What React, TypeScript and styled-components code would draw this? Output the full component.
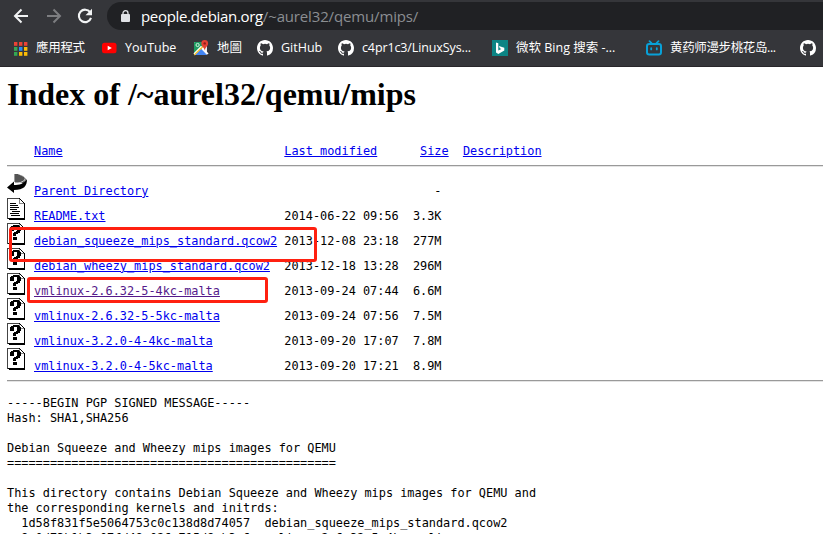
import React from "react";
import styled, { createGlobalStyle } from "styled-components";

const GlobalStyle = createGlobalStyle`
  * { box-sizing: border-box; }
  html, body { margin: 0; padding: 0; background: #fff; overflow: hidden; }
  svg { display: block; flex: none; }
`;

const Window = styled.div`
  position: relative;
  width: 823px;
  height: 534px;
  overflow: hidden;
  background: #fff;
  color: #000;
`;

const Chrome = styled.header`
  height: 67px;
  background: #35363a;
  border-bottom: 1px solid #28262a;
  font-family: "Open Sans", "Noto Sans", "Noto Sans CJK TC", sans-serif;
`;

const Toolbar = styled.div`
  display: flex;
  align-items: center;
  height: 32px;
  padding-left: 13px;
`;

const NavButton = styled.span<{ $gap: number }>`
  display: flex;
  margin-right: ${(p) => p.$gap}px;
`;

const AddressBar = styled.div`
  display: flex;
  align-items: center;
  flex: 1;
  height: 28px;
  padding-left: 14px;
  background: #202124;
  border-radius: 14px 0 0 14px;
`;

const Url = styled.div`
  margin-left: 11px;
  font-size: 15px;
  line-height: 24px;
  white-space: nowrap;
  color: #9aa0a6;
`;

const Host = styled.span`
  color: #fff;
  letter-spacing: -0.32px;
`;

const Path = styled.span`
  color: #8b8e92;
  letter-spacing: -0.15px;
`;

const BookmarkBar = styled.nav`
  display: flex;
  align-items: center;
  height: 32px;
  padding-left: 13px;
`;

const Bookmark = styled.div<{ $width: number }>`
  display: flex;
  align-items: center;
  flex: none;
  gap: 8px;
  width: ${(p) => p.$width}px;
`;

const BookmarkLabel = styled.span<{ $cn?: boolean; $track?: number }>`
  font-family: "Open Sans", ${(p) => (p.$cn ? '"Noto Sans CJK SC"' : '"Noto Sans CJK TC"')}, sans-serif;
  font-size: 12.5px;
  line-height: 18px;
  letter-spacing: ${(p) => p.$track ?? 0}px;
  white-space: nowrap;
  color: #fff;
`;

const Page = styled.main`
  padding: 8px 0 0 7px;
  font-family: "DejaVu Sans Mono", monospace;
  font-size: 11.88px;
  line-height: 15px;
`;

const Title = styled.h1`
  margin: 0 0 31px;
  font: bold 32px/38px "Liberation Serif", serif;
`;

const Rule = styled.hr`
  height: 2px;
  margin: 0;
  border: 0;
  border-top: 1px solid #999;
  border-bottom: 1px solid #e4e4e4;
`;

const Row = styled.div<{ $header?: boolean }>`
  display: grid;
  grid-template-columns: 27px 250.3px 128.6px 50px auto;
  grid-template-rows: 100%;
  align-items: end;
  height: ${(p) => (p.$header ? 21 : 25)}px;
  padding-bottom: ${(p) => (p.$header ? 6 : 0)}px;
`;

const IconCell = styled.span`
  align-self: start;
`;

const Listing = styled.div`
  padding: 7px 0 6px;

  ${IconCell} {
    margin-top: -1px;
  }
`;

const Link = styled.a<{ $visited?: boolean }>`
  justify-self: start;
  color: ${(p) => (p.$visited ? "#551a8b" : "#0000ee")};
  text-decoration: underline;
  text-decoration-thickness: 1px;
  text-underline-offset: 1px;
  white-space: nowrap;
`;

const Cell = styled.span`
  white-space: pre;
`;

const SizeHeader = styled.span`
  padding-left: 7.15px;
`;

const Message = styled.pre`
  margin: 14px 0 0;
  font: inherit;
`;

const Highlight = styled.div<{ $x: number; $y: number; $w: number; $h: number }>`
  position: absolute;
  left: ${(p) => p.$x}px;
  top: ${(p) => p.$y}px;
  width: ${(p) => p.$w}px;
  height: ${(p) => p.$h}px;
  border: 3px solid #ff2010;
  border-radius: 3px;
`;

const Arrow = ({ color, flip }: { color: string; flip?: boolean }) => (
  <svg width="16" height="16" viewBox="0 0 16 16" fill="none" stroke={color} strokeWidth="2">
    <path d={flip ? "M1 8H13.5M7.5 1.5 14 8 7.5 14.5" : "M15 8H2.5M8.5 1.5 2 8 8.5 14.5"} />
  </svg>
);

const Reload = () => (
  <svg width="16" height="16" viewBox="0 0 16 16">
    <path d="M13.1 4.2A6.2 6.2 0 1 0 14 9.8" fill="none" stroke="#f1f3f4" strokeWidth="2.1" />
    <path d="M15 .7v6.6H8.5z" fill="#f1f3f4" />
  </svg>
);

const Lock = () => (
  <svg width="9" height="12" viewBox="0 0 9 12">
    <path d="M2 5V3.2a2.5 2.5 0 0 1 5 0V5" fill="none" stroke="#dfe1e5" strokeWidth="1.3" />
    <rect x="0" y="4" width="9" height="8" rx="1" fill="#dfe1e5" />
  </svg>
);

const appColors = ["#ea4335", "#ea4335", "#ea4335", "#34a853", "#2b8cf0", "#fbbc05", "#34a853", "#fbbc05", "#fbbc05"];
const Apps = () => (
  <svg width="15" height="15" viewBox="0 0 15 15">
    {appColors.map((c, i) => (
      <rect key={i} x={1 + (i % 3) * 5} y={1 + Math.floor(i / 3) * 5} width="3.4" height="3.8" fill={c} />
    ))}
  </svg>
);

const YouTube = () => (
  <svg width="16" height="16" viewBox="0 0 16 16">
    <rect x="1" y="2.7" width="14.5" height="10.6" rx="2.5" fill="#f00" />
    <path d="m6.7 5.7 4.2 2.3-4.2 2.3z" fill="#fff" />
  </svg>
);

const Maps = () => (
  <svg width="16" height="16" viewBox="0 0 16 16">
    <rect x="1" y="2" width="13" height="13" rx="1" fill="#e8eaed" />
    <path d="M2 2h8v6l-9 7V3a1 1 0 0 1 1-1" fill="#1e9b61" />
    <path d="M2 15 8 8.7l6 6.3z" fill="#4285f4" />
    <path d="m1 14 7-7 7 7" fill="none" stroke="#fff" strokeWidth="1.6" />
    <path d="M1.3 15 10 6.5" stroke="#fbc02d" strokeWidth="1.2" />
    <circle cx="4.6" cy="5" r="1.6" fill="none" stroke="#d5f0df" strokeWidth="1" />
    <path d="M11.7 0a3.4 3.4 0 0 1 3.4 3.4c0 2.6-2.8 3.5-3.4 7-.6-3.5-3.4-4.4-3.4-7A3.4 3.4 0 0 1 11.7 0" fill="#e34133" />
    <circle cx="11.7" cy="3.4" r="1.2" fill="#8b1d18" />
  </svg>
);

const GitHub = () => (
  <svg width="16" height="16" viewBox="0 0 16 16">
    <path
      fill="#fff"
      fillRule="evenodd"
      d="M8 0C3.58 0 0 3.58 0 8c0 3.54 2.29 6.53 5.47 7.59.4.07.55-.17.55-.38 0-.19-.01-.82-.01-1.49-2.01.37-2.53-.49-2.69-.94-.09-.23-.48-.94-.82-1.13-.28-.15-.68-.52-.01-.53.63-.01 1.08.58 1.23.82.72 1.21 1.87.87 2.33.66.07-.52.28-.87.51-1.07-1.78-.2-3.64-.89-3.64-3.95 0-.87.31-1.59.82-2.15-.08-.2-.36-1.02.08-2.12 0 0 .67-.21 2.2.82a7.6 7.6 0 0 1 4 0c1.53-1.04 2.2-.82 2.2-.82.44 1.1.16 1.92.08 2.12.51.56.82 1.27.82 2.15 0 3.07-1.87 3.75-3.65 3.95.29.25.54.73.54 1.48 0 1.07-.01 1.93-.01 2.2 0 .21.15.46.55.38A8.01 8.01 0 0 0 16 8c0-4.42-3.58-8-8-8"
    />
  </svg>
);

const Bing = () => (
  <svg width="16" height="16" viewBox="0 0 16 16">
    <rect width="16" height="16" fill="#0c8484" />
    <path d="m4 2.5 2.3.8v7.3l3-1.7-1.5-.7-.9-2.3 5.4 1.9v2.6l-6 3.5L4 12.4z" fill="#fff" />
  </svg>
);

const Bilibili = () => (
  <svg width="16" height="16" viewBox="0 0 16 16" fill="none" stroke="#08a1d8" strokeLinecap="round">
    <rect x="1" y="4" width="14" height="10.5" rx="2.2" strokeWidth="2" />
    <path d="m3.5 1.2 2 2m7-2-2 2" strokeWidth="1.7" />
    <path d="M5.2 8.2v1.2m5.6-1.2v1.2" strokeWidth="1.8" />
  </svg>
);

const PageOutline = () => (
  <>
    <path d="M0 0h13v1h1v1h1v1h1v1h1v1h1v17H2v-1H0z" fill="#000" />
    <path d="M1 1h11v5h5v14H1z" fill="#fff" />
    <path d="M0 0h12v1H1v20H0z" fill="#444" />
    <path d="M13 2h1v1h1v1h1v1h-3z" fill="#fff" />
    <path d="M12 1h1v5h-1zM13 5h4v1h-4z" fill="#888" />
  </>
);

const BackIcon = () => (
  <svg width="20" height="22" viewBox="0 0 20 22">
    <path d="M8 1h3l5 2 3 3v4H8z" fill="#777" />
    <path d="M8 1v8M10 1v8M12 2v7M14 3v6M16 4v6" stroke="#333" strokeWidth="1" />
    <path d="M0 14.5 7 8.5v3.5c5 0 10-1 13-6 0 7-3 11-13 11v3z" fill="#000" />
    <path d="M8 10c4 .5 8-1 10-3.5" fill="none" stroke="#eee" strokeWidth=".8" />
  </svg>
);

const TextIcon = () => (
  <svg width="20" height="22" viewBox="0 0 20 22" shapeRendering="crispEdges">
    <PageOutline />
    <path d="M3 5.5h6M3 7.5h8M3 9.5h9M3 11.5h7M5 13.5h8M3 15.5h9M4 17.5h9" stroke="#000" />
  </svg>
);

const UnknownIcon = () => (
  <svg width="20" height="22" viewBox="0 0 20 22" shapeRendering="crispEdges">
    <PageOutline />
    <path d="M3 4h1V3h2V2h6v1h1v1h1v4h-1v2h-2v1H9v2H6v-3h1V9h2V8h1V4H7v4H3z" fill="#000" />
    <path d="M6 14h4v3H6z" fill="#000" />
  </svg>
);

const icons = { back: BackIcon, text: TextIcon, unknown: UnknownIcon };

type Entry = { icon: keyof typeof icons; name: string; date: string; size: string; visited?: boolean };

const entries: Entry[] = [
  { icon: "back", name: "Parent Directory", date: "", size: "   -" },
  { icon: "text", name: "README.txt", date: "2014-06-22 09:56", size: "3.3K" },
  { icon: "unknown", name: "debian_squeeze_mips_standard.qcow2", date: "2013-12-08 23:18", size: "277M" },
  { icon: "unknown", name: "debian_wheezy_mips_standard.qcow2", date: "2013-12-18 13:28", size: "296M" },
  { icon: "unknown", name: "vmlinux-2.6.32-5-4kc-malta", date: "2013-09-24 07:44", size: "6.6M", visited: true },
  { icon: "unknown", name: "vmlinux-2.6.32-5-5kc-malta", date: "2013-09-24 07:56", size: "7.5M" },
  { icon: "unknown", name: "vmlinux-3.2.0-4-4kc-malta", date: "2013-09-20 17:07", size: "7.8M" },
  { icon: "unknown", name: "vmlinux-3.2.0-4-5kc-malta", date: "2013-09-20 17:21", size: "8.9M" },
];

const message = `-----BEGIN PGP SIGNED MESSAGE-----
Hash: SHA1,SHA256

Debian Squeeze and Wheezy mips images for QEMU
==============================================

This directory contains Debian Squeeze and Wheezy mips images for QEMU and
the corresponding kernels and initrds:
  1d58f831f5e5064753c0c138d8d74057  debian_squeeze_mips_standard.qcow2
  9a0d73b1b3c07fd49e026c715d8ab3e6  vmlinux-2.6.32-5-4kc-malta`;

const bookmarks = [
  { Icon: Apps, label: "應用程式", width: 88, track: -0.3 },
  { Icon: YouTube, label: "YouTube", width: 92, track: 0 },
  { Icon: Maps, label: "地圖", width: 64 },
  { Icon: GitHub, label: "GitHub", width: 81 },
  { Icon: GitHub, label: "c4pr1c3/LinuxSys...", width: 154, track: -0.12 },
  { Icon: Bing, label: "微软 Bing 搜索 -...", width: 154, cn: true },
  { Icon: Bilibili, label: "黄药师漫步桃花岛...", width: 154, cn: true, track: -0.37 },
  { Icon: GitHub, label: "", width: 23 },
];

export default function App() {
  return (
    <Window>
      <GlobalStyle />
      <Chrome>
        <Toolbar>
          <NavButton $gap={17}><Arrow color="#f1f3f4" /></NavButton>
          <NavButton $gap={15}><Arrow color="#7d7e81" flip /></NavButton>
          <NavButton $gap={14}><Reload /></NavButton>
          <AddressBar>
            <Lock />
            <Url><Host>people.debian.org</Host><Path>/~aurel32/qemu/mips/</Path></Url>
          </AddressBar>
        </Toolbar>
        <BookmarkBar>
          {bookmarks.map(({ Icon, label, width, cn, track }, i) => (
            <Bookmark key={i} $width={width}>
              <Icon />
              <BookmarkLabel $cn={cn} $track={track}>{label}</BookmarkLabel>
            </Bookmark>
          ))}
        </BookmarkBar>
      </Chrome>
      <Page>
        <Title>Index of /~aurel32/qemu/mips</Title>
        <Row $header>
          <span />
          <Link>Name</Link>
          <Link>Last modified</Link>
          <SizeHeader><Link>Size</Link></SizeHeader>
          <Link>Description</Link>
        </Row>
        <Rule />
        <Listing>
          {entries.map(({ icon, name, date, size, visited }) => {
            const Icon = icons[icon];
            return (
              <Row key={name}>
                <IconCell><Icon /></IconCell>
                <Link $visited={visited}>{name}</Link>
                <Cell>{date}</Cell>
                <Cell>{size}</Cell>
              </Row>
            );
          })}
        </Listing>
        <Rule />
        <Message>{message}</Message>
      </Page>
      <Highlight $x={9} $y={227} $w={308} $h={35} />
      <Highlight $x={27} $y={277} $w={241} $h={26} />
    </Window>
  );
}
